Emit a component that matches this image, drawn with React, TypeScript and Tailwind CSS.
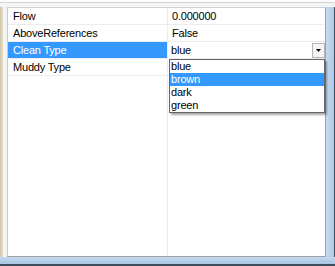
import React from 'react';

type Row = { label: string; value: string; selected?: boolean; combo?: boolean };

const rows: Row[] = [
  { label: 'Flow', value: '0.000000' },
  { label: 'AboveReferences', value: 'False' },
  { label: 'Clean Type', value: 'blue', selected: true, combo: true },
  { label: 'Muddy Type', value: '' },
];

const options = ['blue', 'brown', 'dark', 'green'];

export default function App() {
  return (
    <div className="w-[335px] h-[266px] flex flex-col bg-[#f0f0f0] overflow-hidden text-[11px] tracking-[-0.2px] text-black font-['Liberation_Sans',Arial,sans-serif]">
      {/* top strip */}
      <div className="h-[7px] shrink-0 flex flex-col">
        <div className="h-[2px] bg-[#fbfbfb]" />
        <div className="h-px bg-[#d5d5d5]" />
        <div className="flex-1 bg-[#f4f4f4]" />
      </div>

      <div className="flex-1 flex min-h-0">
        {/* left frame bit */}
        <div className="w-[7px] shrink-0 flex">
          <div className="w-[3px] bg-gradient-to-r from-[#cfc6a8] to-[#e6e0cc]" />
          <div className="flex-1 bg-[#f3f3f3]" />
        </div>

        {/* property grid */}
        <div className="relative flex-1 bg-white border border-[#a0a0a0] border-t-[#d0d0d0] border-l-[#c8c8c8]">
          <div className="absolute left-[159px] top-0 bottom-0 w-px bg-[#ececec]" />
          {rows.map((r) => (
            <div key={r.label} className="flex h-[17px] border-b border-[#ececec]">
              <div
                className={`w-[159px] shrink-0 pl-[5px] leading-[16px] ${
                  r.selected ? 'bg-[#3399ff] text-white' : ''
                }`}
              >
                {r.label}
              </div>
              <div className="w-px shrink-0 bg-[#ececec]" />
              {r.combo ? (
                <div className="flex-1 flex items-center">
                  <span className="pl-[3px] leading-[16px] flex-1">{r.value}</span>
                  <div className="w-[13px] h-[15px] border border-[#b5b5b5] bg-[#f4f4f4] flex items-center justify-center">
                    <svg width="5" height="3" viewBox="0 0 5 3">
                      <path d="M0 0h5L2.5 3z" fill="#000" />
                    </svg>
                  </div>
                </div>
              ) : (
                <div className="flex-1 pl-[4px] leading-[16px]">{r.value}</div>
              )}
            </div>
          ))}

          {/* open dropdown list */}
          <div className="absolute left-[161px] top-[51px] w-[156px] border border-[#646464] bg-white shadow-[2px_2px_2px_rgba(0,0,0,0.35)]">
            {options.map((o) => (
              <div
                key={o}
                className={`h-[13px] leading-[13px] pl-px ${
                  o === 'brown' ? 'bg-[#3399ff] text-white' : ''
                }`}
              >
                {o}
              </div>
            ))}
          </div>
        </div>

        {/* right frame */}
        <div className="w-[9px] shrink-0 flex">
          <div className="flex-1 bg-gradient-to-r from-[#c6dbef] to-[#aecae6]" />
          <div className="w-px bg-[#3c4c5c]" />
        </div>
      </div>

      {/* bottom frame */}
      <div className="h-[9px] shrink-0 flex flex-col">
        <div className="flex-1 bg-gradient-to-b from-[#c3d8ee] to-[#a9c6e4]" />
        <div className="h-[2px] bg-[#3c4c5c]" />
      </div>
    </div>
  );
}
